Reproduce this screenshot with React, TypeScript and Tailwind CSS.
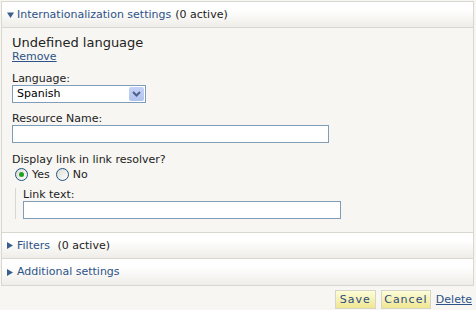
import React from 'react'

function SectionHeader({ open, label, extra, last }: { open?: boolean; label: string; extra?: string; last?: boolean }) {
  return (
    <div className={`flex h-[26px] items-center bg-gradient-to-b from-[#ffffff] from-30% to-[#eeede8] pl-[5px] ${last ? '' : 'border-b border-[#d8d7d0]'}`}>
      {open ? (
        <svg width="7" height="6" viewBox="0 0 7 6" className="mr-[3px]">
          <path d="M0 0.5h7L3.5 6z" fill="#3a5f8e" />
        </svg>
      ) : (
        <svg width="6" height="7" viewBox="0 0 6 7" className="mr-[4px]">
          <path d="M0 0v7l6-3.5z" fill="#3a5f8e" />
        </svg>
      )}
      <span className="text-[#2d5387]">{label}</span>
      {extra && <span className="ml-[4px] whitespace-pre text-[#222]">{extra}</span>}
    </div>
  )
}

function Radio({ checked, label }: { checked?: boolean; label: string }) {
  return (
    <label className="flex items-center gap-[4px]">
      <span className="flex h-[13px] w-[13px] items-center justify-center rounded-full border border-[#1d5281] bg-gradient-to-br from-[#dcdcd4] to-[#ffffff]">
        {checked && <span className="h-[5px] w-[5px] rounded-full bg-[#21a121]" />}
      </span>
      <span className="mr-[2px]">{label}</span>
    </label>
  )
}

export default function App() {
  return (
    <div className="h-[310px] w-[476px] overflow-hidden bg-[#f7f6f2] pt-px pl-px text-[11px] leading-[12px] text-[#222]" style={{ fontFamily: '"DejaVu Sans", Verdana, sans-serif' }}>
      <div className="w-[473px] border border-[#d8d7d0] bg-[#f7f6f2]">
        <SectionHeader open label="Internationalization settings" extra="(0 active)" />
        <div className="border-b border-[#d8d7d0] pl-[10px] pt-[7px] pb-[13px]">
          <div className="text-[13px] leading-[16px] text-[#222]">Undefined language</div>
          <a className="block text-[#2d5387] underline">Remove</a>
          <div className="mt-[10px]">Language:</div>
          <div className="flex h-[18px] w-[134px] items-center justify-between border border-[#7f9db9] bg-white pl-[4px] pr-px">
            <span className="text-[#000]">Spanish</span>
            <span className="flex h-[14px] w-[15px] items-center justify-center rounded-[2px] bg-gradient-to-b from-[#c6d3f7] to-[#b1c2ee]">
              <svg width="9" height="6" viewBox="0 0 9 6">
                <path d="M1 1l3.5 3.5L8 1" fill="none" stroke="#4d6185" strokeWidth="2" />
              </svg>
            </span>
          </div>
          <div className="mt-[10px]">Resource Name:</div>
          <div className="h-[18px] w-[317px] border border-[#7f9db9] bg-white" />
          <div className="mt-[11px]">Display link in link resolver?</div>
          <div className="mt-[2px] flex items-center gap-[4px] pl-[3px]">
            <Radio checked label="Yes" />
            <Radio label="No" />
          </div>
          <div className="mt-[7px] ml-[3px] border-l border-[#d8d7d0] pl-[7px] pt-px">
            <div>Link text:</div>
            <div className="h-[18px] w-[318px] border border-[#7f9db9] bg-white" />
          </div>
        </div>
        <SectionHeader label="Filters" extra=" (0 active)" />
        <SectionHeader label="Additional settings" last />
      </div>
      <div className="mt-[4px] flex items-center justify-end gap-[5px] pr-[4px]">
        <button className="h-[19px] w-[41px] border border-[#d5d5c8] bg-gradient-to-b from-[#fdfdd8] to-[#efe690] tracking-[1px] text-[#2d4c80]">Save</button>
        <button className="h-[19px] w-[50px] border border-[#d5d5c8] bg-gradient-to-b from-[#fdfdd8] to-[#efe690] tracking-[1px] text-[#2d4c80]">Cancel</button>
        <a className="text-[#2d5387] underline">Delete</a>
      </div>
    </div>
  )
}
